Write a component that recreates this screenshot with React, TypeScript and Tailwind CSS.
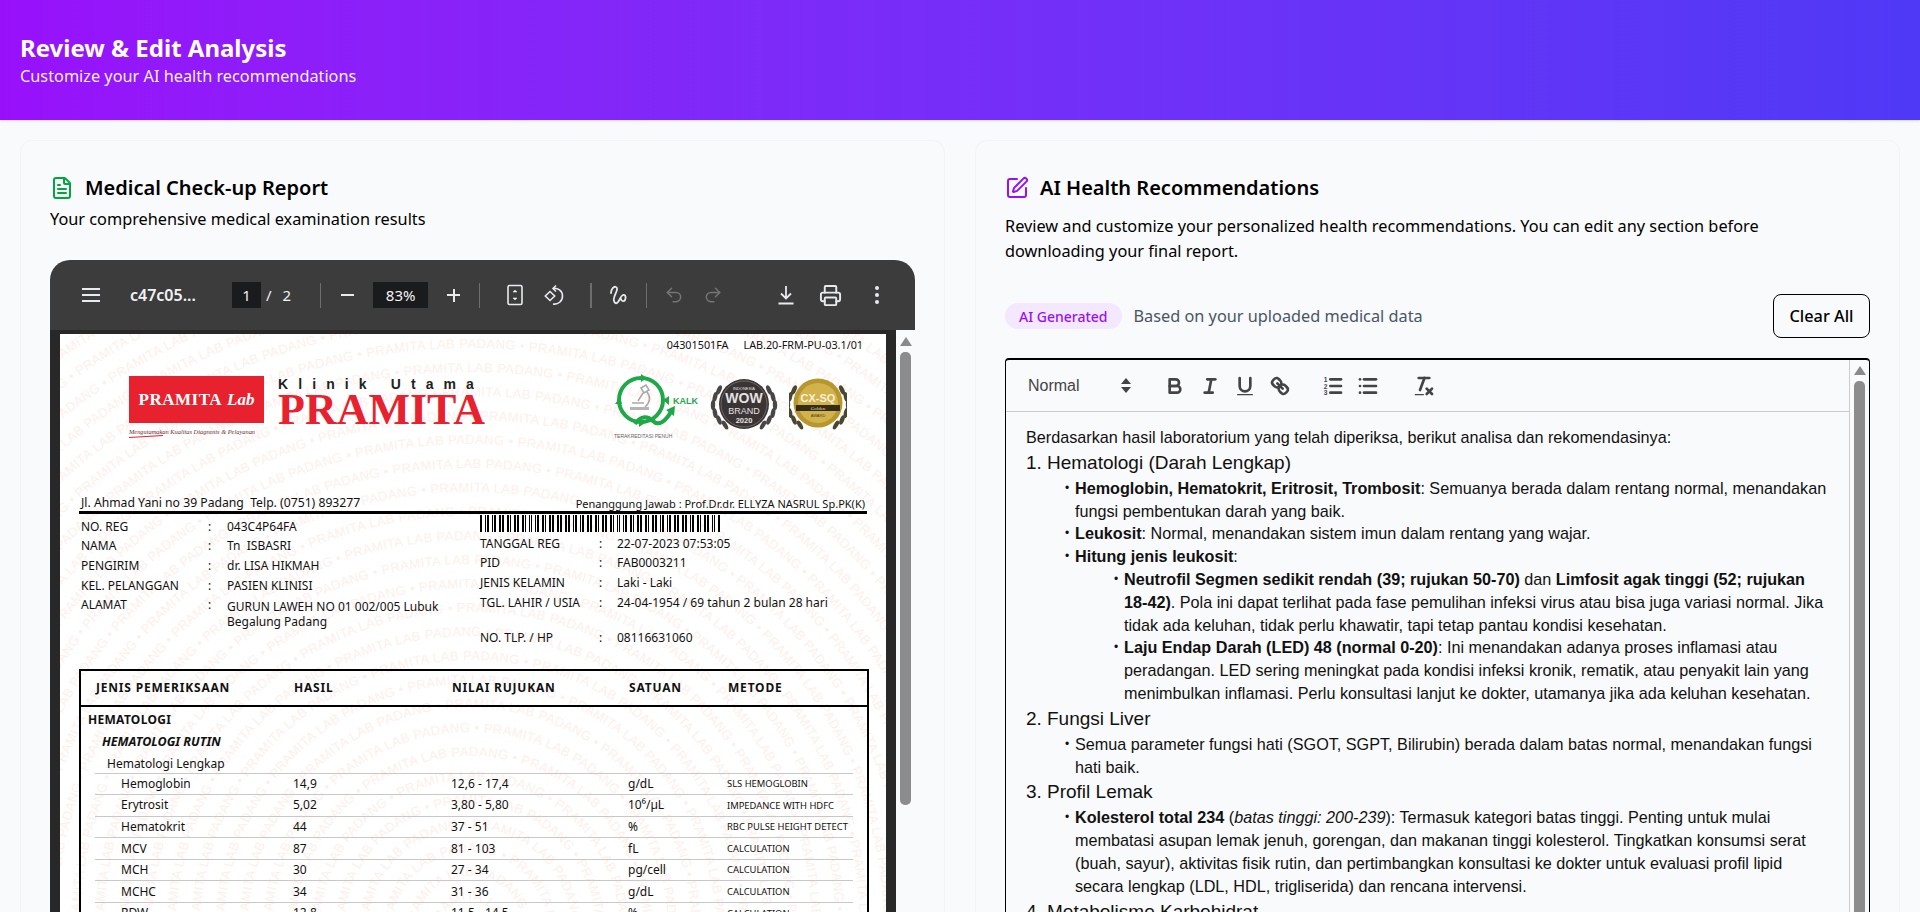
import { FileText, SquarePen, Undo2, Redo2, Printer } from 'lucide-react';

const labRows = [
  ['Hemoglobin', '14,9', '12,6 - 17,4', 'g/dL', 'SLS HEMOGLOBIN'],
  ['Erytrosit', '5,02', '3,80 - 5,80', '10⁶/µL', 'IMPEDANCE WITH HDFC'],
  ['Hematokrit', '44', '37 - 51', '%', 'RBC PULSE HEIGHT DETECT'],
  ['MCV', '87', '81 - 103', 'fL', 'CALCULATION'],
  ['MCH', '30', '27 - 34', 'pg/cell', 'CALCULATION'],
  ['MCHC', '34', '31 - 36', 'g/dL', 'CALCULATION'],
  ['RDW', '12,8', '11,5 - 14,5', '%', 'CALCULATION'],
];

const patientLeft = [
  ['NO. REG', '043C4P64FA'],
  ['NAMA', 'Tn  ISBASRI'],
  ['PENGIRIM', 'dr. LISA HIKMAH'],
  ['KEL. PELANGGAN', 'PASIEN KLINISI'],
];

const patientRight = [
  ['TANGGAL REG', '22-07-2023 07:53:05'],
  ['PID', 'FAB0003211'],
  ['JENIS KELAMIN', 'Laki - Laki'],
  ['TGL. LAHIR / USIA', '24-04-1954 / 69 tahun 2 bulan 28 hari'],
];

const Watermark = () => {
  const cx = 410;
  const cy = 596;
  const radii = Array.from({ length: 34 }, (_, i) => 30 + i * 24);
  return (
    <svg className="absolute inset-0 h-full w-full" aria-hidden="true">
      <defs>
        {radii.map((r) => (
          <path key={r} id={`ring-${r}`} d={`M${cx - r} ${cy}a${r} ${r} 0 1 1 ${2 * r} 0a${r} ${r} 0 1 1 ${-2 * r} 0`} />
        ))}
      </defs>
      {radii.map((r) => (
        <text key={r} fontSize="13" letterSpacing="0.4" fill="#fdf0ec" fontFamily="Liberation Sans, sans-serif">
          <textPath href={`#ring-${r}`}>
            {'PRAMITA LAB PADANG • '.repeat(Math.ceil((2 * Math.PI * r) / 160))}
          </textPath>
        </text>
      ))}
    </svg>
  );
};

const Barcode = () => {
  const bars: { x: number; w: number }[] = [];
  let x = 0;
  let seed = 17;
  while (x < 240) {
    seed = (seed * 137 + 59) % 256;
    const w = [2, 3, 1, 4, 2, 3][seed % 6];
    bars.push({ x, w });
    seed = (seed * 137 + 59) % 256;
    x += w + [1, 1, 2, 3][seed % 4];
  }
  return (
    <svg width="243" height="17" className="block">
      {bars.map((b) => (
        <rect key={b.x} x={b.x} y="0" width={b.w} height="17" fill="#000" />
      ))}
    </svg>
  );
};

const KalkLogo = () => (
  <svg width="86" height="66" viewBox="0 0 86 66">
    <circle cx="28" cy="26" r="22" fill="none" stroke="#1fa84a" strokeWidth="4" />
    <path d="M22 50c6-9 13-8 18-3 5 5 12 2 19-11" fill="none" stroke="#1fa84a" strokeWidth="4" />
    <path d="M53 36l9-4-1 10zM28 0l6 4-6 4zM50 26l6-4v9zM2 30l5-7 2 7zM26 46l6 3-6 4z" fill="#1fa84a" />
    <g fill="none" stroke="#a8a8a8" strokeWidth="1.500">
      <path d="M28 14l5-3 3 5-5 3zM30 19l-5 8M34 18c4 5 3 11-2 15" />
      <path d="M19 29h12" />
    </g>
    <rect x="17" y="33" width="19" height="3" fill="#b5b5b5" />
    <text x="60" y="30" fontSize="9" fontWeight="700" fill="#1fa84a" fontFamily="Liberation Sans, sans-serif">KALK</text>
    <text x="1" y="64" fontSize="5" fill="#666" fontFamily="Liberation Sans, sans-serif">TERAKREDITASI PENUH</text>
  </svg>
);

const Laurel = ({ flip, color, width = 68 }: { flip?: boolean; color: string; width?: number }) => (
  <g transform={flip ? `translate(${width} 0) scale(-1 1)` : undefined} fill={color}>
    {[[9, 12], [5, 19], [3, 27], [5, 35], [9, 42], [15, 47]].map(([x, y]) => (
      <ellipse key={y} cx={x} cy={y} rx="2.200" ry="5" transform={`rotate(${(y - 28) * -1.6} ${x} ${y})`} />
    ))}
  </g>
);

const WowSeal = () => (
  <svg width="68" height="52" viewBox="0 0 68 52">
    <Laurel color="#4a4645" />
    <Laurel flip color="#4a4645" />
    <circle cx="34" cy="26" r="25" fill="#3a3534" />
    <circle cx="34" cy="26" r="23" fill="none" stroke="#8e8a89" strokeWidth="0.600" />
    <g textAnchor="middle" fontFamily="Liberation Sans, sans-serif" fill="#e4e2e2">
      <text x="34" y="12" fontSize="4">INDONESIA</text>
      <text x="34" y="25" fontSize="14" fontWeight="700">WOW</text>
      <text x="34" y="36" fontSize="9">BRAND</text>
      <text x="34" y="45" fontSize="7.500" fontWeight="700">2020</text>
    </g>
  </svg>
);

const GoldSeal = () => (
  <svg width="58" height="52" viewBox="0 0 58 52">
    <g transform="translate(-4 0)">
      <Laurel color="#4a4630" width={66} />
      <Laurel flip color="#4a4630" width={66} />
    </g>
    <circle cx="29" cy="25" r="24.500" fill="#b8962e" />
    <circle cx="29" cy="25" r="20" fill="#d2b24a" />
    <rect x="7" y="27" width="44" height="6" fill="#332c17" />
    <g textAnchor="middle" fontFamily="Liberation Sans, sans-serif">
      <text x="29" y="24" fontSize="11" fontWeight="700" fill="#f4f0dd">CX-SQ</text>
      <text x="29" y="32" fontSize="5" fill="#e9dfb0" fontFamily="Liberation Serif, serif">Golden</text>
      <text x="29" y="39" fontSize="4" fill="#4a3f17">AWARD</text>
    </g>
  </svg>
);

const PdfPage = () => (
  <div className="relative h-[700px] w-[826px] overflow-hidden bg-white font-['Noto_Sans',sans-serif] text-[12px] leading-none text-[#111]">
    <Watermark />
    <div className="relative flex flex-col">
      <div className="flex h-[42px] justify-end gap-[15px] pt-[6px] pr-[23px] text-[10.800px]">
        <span>04301501FA</span>
        <span>LAB.20-FRM-PU-03.1/01</span>
      </div>

      <div className="flex h-[119px] items-start pl-[69px]">
        <div className="w-[135px]">
          <div className="flex h-[47px] items-center justify-center gap-[5px] bg-[#e8212e] font-['Liberation_Serif',serif] text-white">
            <span className="text-[17px] font-bold tracking-[0.5px]">PRAMITA</span>
            <span className="text-[17px] font-bold italic">Lab</span>
          </div>
          <div className="mt-[6px] whitespace-nowrap font-['Liberation_Serif',serif] text-[6.400px] italic text-[#6b2b2b]">
            Mengutamakan Kualitas Diagnosis &amp; Pelayanan
          </div>
          <div className="mt-[1px] h-[1px] w-[34px] -rotate-3 bg-[#e8212e]" />
        </div>
        <div className="ml-[14px] flex w-[215px] flex-col">
          <span className="mt-[1px] font-['Liberation_Sans',sans-serif] text-[14px] font-bold tracking-[10.100px] whitespace-nowrap text-[#222]">
            Klinik Utama
          </span>
          <span className="mt-[1px] font-['Liberation_Serif',serif] text-[44px] font-bold leading-[36px] text-[#e8212e]">
            PRAMITA
          </span>
        </div>
        <div className="ml-[120px] -mt-[2px]">
          <KalkLogo />
        </div>
        <div className="ml-[11px] mt-[2px]">
          <WowSeal />
        </div>
        <div className="ml-[11px] mt-[2px]">
          <GoldSeal />
        </div>
      </div>

      <div className="mx-[19px] flex h-[19px] w-[788px] items-center justify-between border-b-[3px] border-black px-[2px]">
        <span className="text-[12.200px] whitespace-pre">Jl. Ahmad Yani no 39 Padang  Telp. (0751) 893277</span>
        <span className="text-[11px]">Penanggung Jawab : Prof.Dr.dr. ELLYZA NASRUL Sp.PK(K)</span>
      </div>

      <div className="flex h-[155px] pl-[21px]">
        <div className="w-[399px] pt-[3px]">
          {patientLeft.map(([label, value]) => (
            <div key={label} className="flex h-[19.600px] items-center whitespace-pre">
              <span className="w-[127px]">{label}</span>
              <span className="w-[19px]">:</span>
              <span>{value}</span>
            </div>
          ))}
          <div className="flex pt-[4px]">
            <span className="w-[127px]">ALAMAT</span>
            <span className="w-[19px]">:</span>
            <span className="w-[225px] leading-[15px]">GURUN LAWEH NO 01 002/005 Lubuk Begalung Padang</span>
          </div>
        </div>
        <div className="pt-[1px]">
          <Barcode />
          <div className="pt-[2px]">
            {patientRight.map(([label, value]) => (
              <div key={label} className="flex h-[19.600px] items-center">
                <span className="w-[119px]">{label}</span>
                <span className="w-[18px]">:</span>
                <span>{value}</span>
              </div>
            ))}
            <div className="mt-[16px] flex h-[19.600px] items-center">
              <span className="w-[119px]">NO. TLP. / HP</span>
              <span className="w-[18px]">:</span>
              <span>08116631060</span>
            </div>
          </div>
        </div>
      </div>

      <div className="ml-[19px] w-[790px] border-2 border-b-0 border-black">
        <div className="grid h-[36px] grid-cols-[198px_158px_177px_99px_1fr] items-center border-b-2 border-black pl-[15px] text-[12px] font-bold tracking-[0.8px]">
          <span>JENIS PEMERIKSAAN</span>
          <span>HASIL</span>
          <span>NILAI RUJUKAN</span>
          <span>SATUAN</span>
          <span>METODE</span>
        </div>
        <div className="pt-[7px] pl-[7px] text-[12px] font-bold tracking-[0.3px]">HEMATOLOGI</div>
        <div className="pt-[10px] pl-[21px] text-[12.500px] font-bold italic">HEMATOLOGI RUTIN</div>
        <div className="pt-[9px] pl-[26px] pb-[3px]">Hematologi Lengkap</div>
        <div className="mx-[14px]">
          {labRows.map(([name, result, range, unit, method]) => (
            <div
              key={name}
              className="grid h-[21.600px] grid-cols-[172px_158px_177px_99px_1fr] items-center border-t border-[#c8c8c8] pl-[26px]"
            >
              <span>{name}</span>
              <span>{result}</span>
              <span>{range}</span>
              <span>{unit}</span>
              <span className="whitespace-nowrap text-[9.400px]">{method}</span>
            </div>
          ))}
        </div>
      </div>
    </div>
  </div>
);

const FitIcon = () => (
  <svg width="24" height="24" viewBox="0 0 24 24" fill="none" stroke="#e8eaed">
    <rect x="5" y="2.500" width="14" height="19" rx="1.500" strokeWidth="1.600" />
    <path d="M10 9l2-2 2 2zM10 15l2 2 2-2z" fill="#e8eaed" strokeWidth="0.600" />
  </svg>
);

const RotateIcon = () => (
  <svg width="24" height="24" viewBox="0 0 24 24" fill="none" stroke="#e8eaed" strokeWidth="1.600">
    <path d="M8 8.500l4.700 4.500L8 17.500 3.300 13z" />
    <path d="M11.500 5.500c4-.6 9 1.900 9 7.500a8 8 0 0 1-9.500 8" />
    <path d="M14 2.500l-3 3 3 3" />
  </svg>
);

const InkIcon = () => (
  <svg width="24" height="24" viewBox="0 0 24 24" fill="none" stroke="#e8eaed" strokeWidth="1.800" strokeLinecap="round">
    <path d="M4 10c0-4 3-7 5-6 3 1-1 7-2 11-1 3 1 6 3 5 3-2 3-7 6-8 3-.5 3 3 2 5-1 2-4 1-4-1" />
  </svg>
);

const DownloadIcon = () => (
  <svg width="24" height="24" viewBox="0 0 24 24" fill="none" stroke="#e8eaed" strokeWidth="1.800">
    <path d="M12 3v12M7 10.500l5 5 5-5M4.500 20.500h15" />
  </svg>
);

const MenuIcon = () => (
  <div className="flex w-[18px] flex-col gap-[4px]">
    <div className="h-[2px] bg-[#e8eaed]" />
    <div className="h-[2px] bg-[#e8eaed]" />
    <div className="h-[2px] bg-[#e8eaed]" />
  </div>
);

const ToolbarDivider = ({ className }: { className: string }) => (
  <div className={`h-[25px] w-[1px] bg-[#6e6e6e] ${className}`} />
);

const PdfToolbar = () => (
  <div className="flex h-[70px] items-center rounded-t-[20px] bg-[#3c3c3c] font-['Noto_Sans',sans-serif] text-[15px] text-[#f1f3f4]">
    <div className="ml-[32px]">
      <MenuIcon />
    </div>
    <span className="ml-[30px] w-[70px] text-[16px] font-semibold">c47c05...</span>
    <span className="ml-[32px] flex h-[26px] w-[29px] items-center justify-center bg-[#191b1c]">1</span>
    <span className="ml-[5px]">/</span>
    <span className="ml-[11px]">2</span>
    <ToolbarDivider className="ml-[29px]" />
    <div className="ml-[20px] h-[2px] w-[13px] bg-[#e8eaed]" />
    <span className="ml-[19px] flex h-[26px] w-[55px] items-center justify-center bg-[#191b1c]">83%</span>
    <span className="ml-[19px] relative flex h-[13px] w-[13px] items-center justify-center">
      <span className="h-[2px] w-[13px] bg-[#e8eaed]" />
      <span className="absolute h-[13px] w-[2px] bg-[#e8eaed]" />
    </span>
    <ToolbarDivider className="ml-[19px]" />
    <div className="ml-[23px]">
      <FitIcon />
    </div>
    <div className="ml-[15px]">
      <RotateIcon />
    </div>
    <div className="ml-[24px] h-[25px] w-[2px] bg-[#6e6e6e]" />
    <div className="ml-[15px]">
      <InkIcon />
    </div>
    <ToolbarDivider className="ml-[15px]" />
    <Undo2 className="ml-[17px] text-[#757575]" size={20} strokeWidth={1.800} />
    <Redo2 className="ml-[19px] text-[#757575]" size={20} strokeWidth={1.800} />
    <div className="ml-[51px]">
      <DownloadIcon />
    </div>
    <Printer className="ml-[21px] text-[#e8eaed]" size={23} strokeWidth={2} />
    <div className="ml-[33px] flex flex-col gap-[3px]">
      <div className="h-[4px] w-[4px] rounded-full bg-[#e8eaed]" />
      <div className="h-[4px] w-[4px] rounded-full bg-[#e8eaed]" />
      <div className="h-[4px] w-[4px] rounded-full bg-[#e8eaed]" />
    </div>
  </div>
);

const PdfViewer = () => (
  <div className="flex flex-col">
    <PdfToolbar />
    <div className="flex h-[700px] bg-[#282828]">
      <div className="flex-1 pt-[4px] pl-[10px]">
        <PdfPage />
      </div>
      <div className="flex w-[19px] flex-col items-center bg-[#f9fafb] pt-[7px]">
        <div className="h-0 w-0 border-x-[6px] border-b-[9px] border-x-transparent border-b-[#8a8a8a]" />
        <div className="mt-[6px] h-[453px] w-[11px] rounded-[5px] bg-[#8c8c8c]" />
      </div>
    </div>
  </div>
);

const qlStroke = { fill: 'none', stroke: '#444', strokeWidth: 2, strokeLinecap: 'round', strokeLinejoin: 'round' } as const;

const QuillIcon = ({ children }: { children: React.ReactNode }) => (
  <svg width="24" height="24" viewBox="0 0 18 18" {...qlStroke}>
    {children}
  </svg>
);

const EditorToolbar = () => (
  <div className="flex h-[52px] items-center border-b border-[#ccc] text-[#444]">
    <span className="ml-[22px] w-[93px] font-['Liberation_Sans',sans-serif] text-[16px]">Normal</span>
    <div className="flex w-[10px] flex-col gap-[3px]">
      <div className="h-0 w-0 border-x-[5px] border-b-[6px] border-x-transparent border-b-[#444]" />
      <div className="h-0 w-0 border-x-[5px] border-t-[6px] border-x-transparent border-t-[#444]" />
    </div>
    <div className="ml-[32px] flex gap-[11px]">
      <QuillIcon>
        <path d="M5,4H9.500A2.500,2.500,0,0,1,12,6.500v0A2.500,2.500,0,0,1,9.500,9H5V4Z" />
        <path d="M5,9h5.500A2.500,2.500,0,0,1,13,11.500v0A2.500,2.500,0,0,1,10.500,14H5V9Z" />
      </QuillIcon>
      <QuillIcon>
        <line x1="7" x2="13" y1="4" y2="4" />
        <line x1="5" x2="11" y1="14" y2="14" />
        <line x1="8" x2="10" y1="14" y2="4" />
      </QuillIcon>
      <QuillIcon>
        <path d="M5,3V9a4.012,4.012,0,0,0,4,4H9a4.012,4.012,0,0,0,4-4V3" />
        <rect x="3" y="15" width="12" height="1" rx="0.500" fill="#444" stroke="none" />
      </QuillIcon>
      <QuillIcon>
        <line x1="7" x2="11" y1="7" y2="11" />
        <path d="M8.900,4.577a3.476,3.476,0,0,1,.36,4.679A3.476,3.476,0,0,1,4.577,8.900C3.185,7.500,2.035,6.400,4.217,4.217S7.500,3.185,8.900,4.577Z" />
        <path d="M13.423,9.100a3.476,3.476,0,0,0-4.679-.36,3.476,3.476,0,0,0,.36,4.679c1.392,1.392,2.500,2.542,4.679.36S14.815,10.500,13.423,9.100Z" />
      </QuillIcon>
    </div>
    <div className="ml-[29px] flex gap-[11px]">
      <QuillIcon>
        <line x1="7" x2="15" y1="4" y2="4" />
        <line x1="7" x2="15" y1="9" y2="9" />
        <line x1="7" x2="15" y1="14" y2="14" />
        <g fontSize="5" fontWeight="700" fill="#444" stroke="none" fontFamily="Liberation Sans, sans-serif">
          <text x="2" y="6">1</text>
          <text x="2" y="11">2</text>
          <text x="2" y="16">3</text>
        </g>
      </QuillIcon>
      <QuillIcon>
        <line x1="6" x2="15" y1="4" y2="4" />
        <line x1="6" x2="15" y1="9" y2="9" />
        <line x1="6" x2="15" y1="14" y2="14" />
        <line x1="3" x2="3" y1="4" y2="4" />
        <line x1="3" x2="3" y1="9" y2="9" />
        <line x1="3" x2="3" y1="14" y2="14" />
      </QuillIcon>
    </div>
    <div className="ml-[32px]">
      <QuillIcon>
        <line x1="5" x2="13" y1="3" y2="3" />
        <line x1="6" x2="9.350" y1="12" y2="3" />
        <line x1="11" x2="15" y1="11" y2="15" />
        <line x1="15" x2="11" y1="11" y2="15" />
        <rect x="2" y="15" width="7" height="1" rx="0.500" fill="#444" stroke="none" />
      </QuillIcon>
    </div>
  </div>
);

const Bullet = ({ level = 1, children }: { level?: 1 | 2; children: React.ReactNode }) => (
  <div className={level === 1 ? 'flex pl-[39px]' : 'flex pl-[88px]'}>
    <span className="w-[10px] shrink-0 text-[12px]">•</span>
    <div>{children}</div>
  </div>
);

const Heading = ({ n, children }: { n: number; children: React.ReactNode }) => (
  <div className="mt-[1px] flex h-[27px] items-center text-[19px]">
    <span className="w-[21px]">{n}.</span>
    <span>{children}</span>
  </div>
);

const EditorBody = () => (
  <div className="h-[520px] overflow-hidden pt-[14px] pr-[20px] pl-[20px] font-['Liberation_Sans',sans-serif] text-[16.200px] leading-[22.800px] text-[#111]">
    <p>Berdasarkan hasil laboratorium yang telah diperiksa, berikut analisa dan rekomendasinya:</p>
    <Heading n={1}>Hematologi (Darah Lengkap)</Heading>
    <Bullet>
      <b>Hemoglobin, Hematokrit, Eritrosit, Trombosit</b>: Semuanya berada dalam rentang normal, menandakan fungsi
      pembentukan darah yang baik.
    </Bullet>
    <Bullet>
      <b>Leukosit</b>: Normal, menandakan sistem imun dalam rentang yang wajar.
    </Bullet>
    <Bullet>
      <b>Hitung jenis leukosit</b>:
    </Bullet>
    <Bullet level={2}>
      <b>Neutrofil Segmen sedikit rendah (39; rujukan 50-70)</b> dan <b>Limfosit agak tinggi (52; rujukan 18-42)</b>.
      Pola ini dapat terlihat pada fase pemulihan infeksi virus atau bisa juga variasi normal. Jika tidak ada keluhan,
      tidak perlu khawatir, tapi tetap pantau kondisi kesehatan.
    </Bullet>
    <Bullet level={2}>
      <b>Laju Endap Darah (LED) 48 (normal 0-20)</b>: Ini menandakan adanya proses inflamasi atau peradangan. LED sering
      meningkat pada kondisi infeksi kronik, rematik, atau penyakit lain yang menimbulkan inflamasi. Perlu konsultasi
      lanjut ke dokter, utamanya jika ada keluhan kesehatan.
    </Bullet>
    <Heading n={2}>Fungsi Liver</Heading>
    <Bullet>
      Semua parameter fungsi hati (SGOT, SGPT, Bilirubin) berada dalam batas normal, menandakan fungsi hati baik.
    </Bullet>
    <Heading n={3}>Profil Lemak</Heading>
    <Bullet>
      <b>Kolesterol total 234</b> (<i>batas tinggi: 200-239</i>): Termasuk kategori batas tinggi. Penting untuk mulai
      membatasi asupan lemak jenuh, gorengan, dan makanan tinggi kolesterol. Tingkatkan konsumsi serat (buah, sayur),
      aktivitas fisik rutin, dan pertimbangkan konsultasi ke dokter untuk evaluasi profil lipid secara lengkap (LDL,
      HDL, trigliserida) dan rencana intervensi.
    </Bullet>
    <Heading n={4}>Metabolisme Karbohidrat</Heading>
  </div>
);

const Editor = () => (
  <div className="flex overflow-hidden rounded-[4px] border border-t-2 border-black">
    <div className="flex-1 border-r border-[#ccc]">
      <EditorToolbar />
      <EditorBody />
    </div>
    <div className="flex w-[19px] flex-col items-center pt-[6px]">
      <div className="h-0 w-0 border-x-[6px] border-b-[9px] border-x-transparent border-b-[#8a8a8a]" />
      <div className="mt-[6px] h-[560px] w-[11px] rounded-[5px] bg-[#8c8c8c]" />
    </div>
  </div>
);

const App = () => {
  return (
    <div className="h-[912px] overflow-hidden bg-[#f9fafb] font-['Noto_Sans',sans-serif] text-black">
      <header className="relative flex h-[120px] flex-col justify-center bg-gradient-to-r from-[#9810fa] to-[#4f39f6] px-5 text-white shadow-sm">
        <h1 className="text-[24px] leading-[32px] font-bold">Review &amp; Edit Analysis</h1>
        <p className="text-[16.300px] leading-[24px] text-white/95">Customize your AI health recommendations</p>
      </header>

      <main className="grid grid-cols-2 gap-[30px] px-5 pt-5">
        <section className="rounded-t-xl border border-[#f3f4f6] p-[29px]">
          <div className="flex h-[36px] items-center gap-[8px]">
            <FileText className="text-[#00a63e]" size={24} />
            <h2 className="ml-[3px] text-[20px] font-semibold">Medical Check-up Report</h2>
          </div>
          <p className="mt-[1px] mb-[29px] text-[16.300px] leading-[24px]">Your comprehensive medical examination results</p>
          <PdfViewer />
        </section>

        <section className="rounded-t-xl border border-[#f3f4f6] p-[29px]">
          <div className="flex h-[36px] items-center gap-[8px]">
            <SquarePen className="text-[#9810fa]" size={24} />
            <h2 className="ml-[3px] text-[20px] font-semibold">AI Health Recommendations</h2>
          </div>
          <p className="mt-[8px] max-w-[830px] text-[16.300px] leading-[25px]">
            Review and customize your personalized health recommendations. You can edit any section before downloading your
            final report.
          </p>
          <div className="mt-[30px] flex h-[44px] items-center justify-between">
            <div className="flex items-center gap-[12px]">
              <span className="flex h-[26px] items-center rounded-full bg-[#f3e8ff] px-[14px] text-[14px] font-medium text-[#9810fa]">
                AI Generated
              </span>
              <span className="text-[16.300px] text-[#4a5565]">Based on your uploaded medical data</span>
            </div>
            <button type="button" className="h-[44px] w-[97px] rounded-lg border border-black text-[16.300px] font-medium">
              Clear All
            </button>
          </div>
          <div className="mt-[20px]">
            <Editor />
          </div>
        </section>
      </main>
    </div>
  );
};

export default App;
